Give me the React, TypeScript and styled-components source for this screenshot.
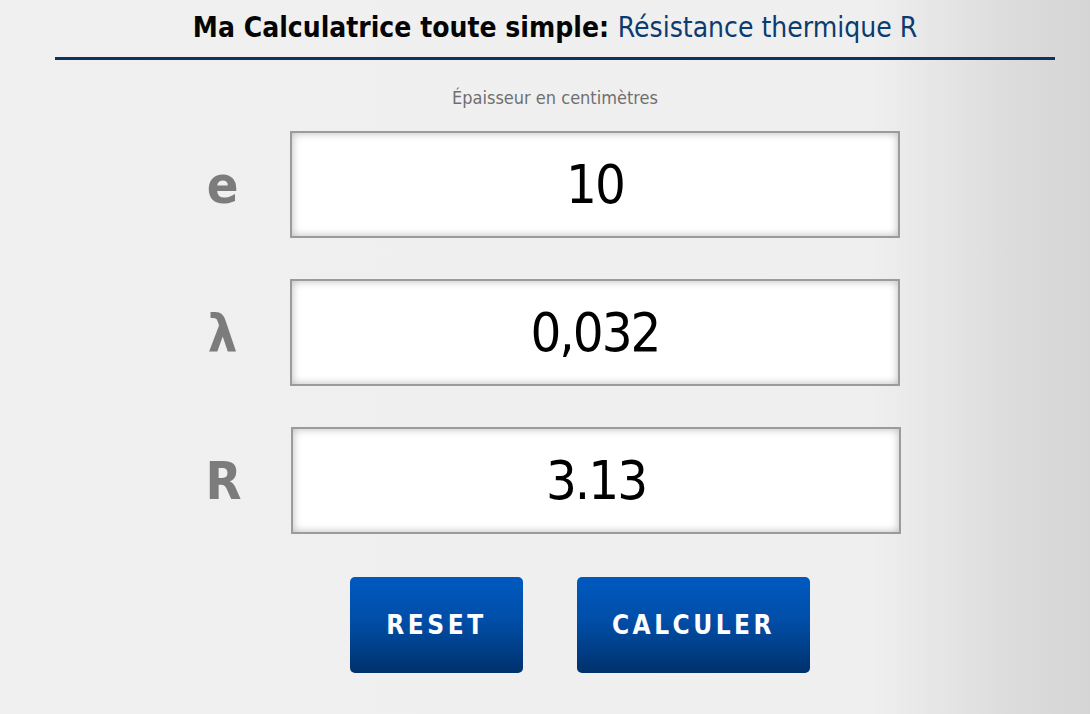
import React, { useState } from "react";
import styled, { createGlobalStyle } from "styled-components";

const Global = createGlobalStyle`
  html, body { margin: 0; padding: 0; }
  body {
    width: 1090px;
    height: 714px;
    overflow: hidden;
    background: linear-gradient(to right, #f0f0f0 0%, #efefef 80%, #dddddd 92%, #d5d5d5 100%);
    font-family: "DejaVu Sans Condensed", "Liberation Sans", sans-serif;
  }
`;

const Page = styled.main`
  width: 1000px;
  margin-left: 55px;
  display: flex;
  flex-direction: column;
`;

const Title = styled.h1`
  margin: 0;
  padding-top: 11px;
  height: 46px;
  font-size: 28px;
  line-height: 34px;
  font-weight: 700;
  text-align: center;
  color: #050505;
  border-bottom: 3px solid #0b3461;
`;

const Accent = styled.span`
  color: #0c3b70;
  font-weight: 400;
`;

const Hint = styled.p`
  margin: 28px 0 0;
  font-size: 18px;
  line-height: 20px;
  color: #6f6f6f;
  text-align: center;
`;

const Rows = styled.div`
  display: flex;
  flex-direction: column;
  gap: 41px;
  margin-top: 23px;
  margin-left: 125px;
`;

const Row = styled.div<{ $shift?: number }>`
  display: flex;
  align-items: center;
  gap: 25px;
  margin-left: ${(p) => p.$shift ?? 0}px;
`;

const Symbol = styled.label`
  width: 85px;
  text-align: center;
  font-size: 52px;
  font-weight: 700;
  line-height: 1;
  color: #7c7c7c;
`;

const Field = styled.input`
  box-sizing: border-box;
  width: 610px;
  height: 107px;
  border: 2px solid #9b9b9b;
  background: #ffffff;
  box-shadow: inset 0 0 9px rgba(0, 0, 0, 0.28);
  font-family: inherit;
  font-size: 54px;
  letter-spacing: -2px;
  color: #000000;
  text-align: center;
  outline: none;
  padding: 0;
`;

const Buttons = styled.div`
  display: flex;
  gap: 54px;
  margin-top: 43px;
  margin-left: 295px;
`;

const Button = styled.button<{ $w: number }>`
  width: ${(p) => p.$w}px;
  height: 96px;
  border: none;
  border-radius: 5px;
  background: linear-gradient(to bottom, #0059c0 0%, #004ea8 45%, #00316c 100%);
  color: #ffffff;
  font-family: inherit;
  font-weight: 700;
  font-size: 26px;
  letter-spacing: 3.5px;
  padding: 0;
  cursor: pointer;
`;

export default function App() {
  const [e, setE] = useState("10");
  const [l, setL] = useState("0,032");
  const [r, setR] = useState("3.13");

  const calc = () => {
    const ev = parseFloat(e.replace(",", "."));
    const lv = parseFloat(l.replace(",", "."));
    if (ev > 0 && lv > 0) setR((ev / 100 / lv).toFixed(2));
  };
  const reset = () => {
    setE("");
    setL("");
    setR("");
  };

  return (
    <>
      <Global />
      <Page>
        <Title>
          Ma Calculatrice toute simple: <Accent>Résistance thermique R</Accent>
        </Title>
        <Hint>Épaisseur en centimètres</Hint>
        <Rows>
          <Row>
            <Symbol htmlFor="e">e</Symbol>
            <Field id="e" value={e} onChange={(ev) => setE(ev.target.value)} />
          </Row>
          <Row>
            <Symbol htmlFor="l">λ</Symbol>
            <Field id="l" value={l} onChange={(ev) => setL(ev.target.value)} />
          </Row>
          <Row $shift={1}>
            <Symbol htmlFor="r">R</Symbol>
            <Field id="r" value={r} readOnly />
          </Row>
        </Rows>
        <Buttons>
          <Button $w={173} onClick={reset}>RESET</Button>
          <Button $w={233} onClick={calc}>CALCULER</Button>
        </Buttons>
      </Page>
    </>
  );
}
